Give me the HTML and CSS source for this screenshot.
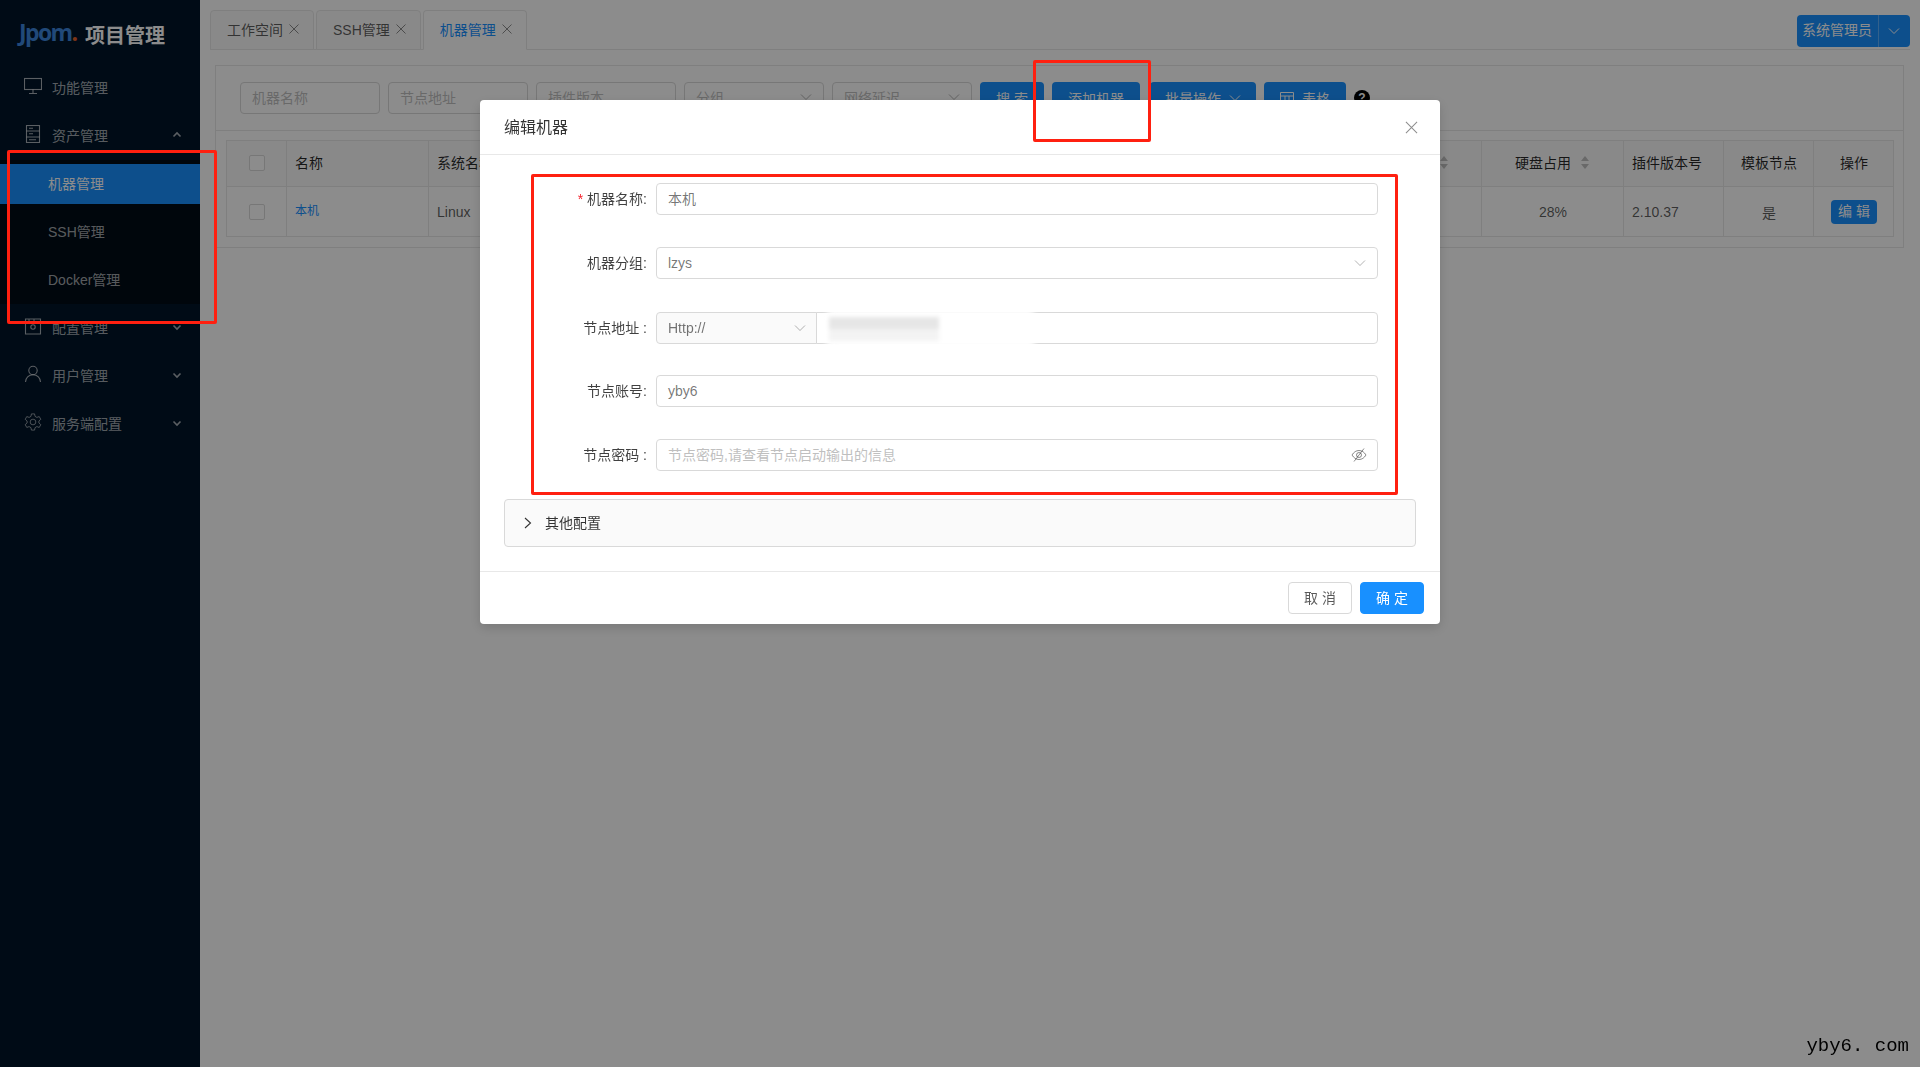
FILE: index.html
```html
<!DOCTYPE html>
<html lang="zh-CN">
<head>
  <meta charset="UTF-8">
  <title>机器管理</title>
  <link rel="stylesheet" href="styles.css">
</head>
<body>
  <div class="layout">
    <!-- Sidebar -->
    <aside class="sider">
      <div class="logo">
        <span class="logo-mark">Jpom<span class="logo-dot">.</span></span>
        <span class="logo-title">项目管理</span>
      </div>
      <div class="menu-item">
        <svg class="menu-icon" viewBox="0 0 18 18"><rect x="0.5" y="1.5" width="17" height="11"/><path d="M9 12.500v3.500M5 16.500h8"/></svg>
        <span>功能管理</span>
      </div>
      <div class="menu-item">
        <svg class="menu-icon" viewBox="0 0 18 18"><rect x="2.500" y="0.500" width="13" height="17"/><path d="M2.500 6h13M2.500 12h13M5 3.200h4M5 8.800h4M5 14.800h7"/></svg>
        <span>资产管理</span>
        <svg class="menu-arrow" viewBox="0 0 10 10"><path d="M1.500 6.500L5 3l3.500 3.500"/></svg>
      </div>
      <div class="submenu">
        <div class="sub-item active">机器管理</div>
        <div class="sub-item">SSH管理</div>
        <div class="sub-item">Docker管理</div>
      </div>
      <div class="menu-item">
        <svg class="menu-icon" viewBox="0 0 18 18"><path d="M1.500 2h15v15h-15zM5 2v2.500h5V2"/><circle cx="9" cy="10" r="2.200"/></svg>
        <span>配置管理</span>
        <svg class="menu-arrow" viewBox="0 0 10 10"><path d="M1.500 3.500L5 7l3.500-3.500"/></svg>
      </div>
      <div class="menu-item">
        <svg class="menu-icon" viewBox="0 0 18 18"><circle cx="9" cy="5.500" r="4.200"/><path d="M1.500 17c0-4.200 3.200-7.300 7.500-7.300s7.500 3.100 7.500 7.300"/></svg>
        <span>用户管理</span>
        <svg class="menu-arrow" viewBox="0 0 10 10"><path d="M1.500 3.500L5 7l3.500-3.500"/></svg>
      </div>
      <div class="menu-item">
        <svg class="menu-icon" viewBox="0 0 24 24"><polygon points="14.74,4.48 14.1,1.2 9.9,1.2 9.26,4.48 6.86,5.87 3.7,4.78 1.6,8.42 4.12,10.61 4.12,13.39 1.6,15.58 3.7,19.22 6.86,18.13 9.26,19.52 9.9,22.8 14.1,22.8 14.74,19.52 17.14,18.13 20.3,19.22 22.4,15.58 19.88,13.39 19.88,10.61 22.4,8.42 20.3,4.78 17.14,5.87"/><circle cx="12" cy="12" r="3.8"/></svg>
        <span>服务端配置</span>
        <svg class="menu-arrow" viewBox="0 0 10 10"><path d="M1.500 3.500L5 7l3.500-3.500"/></svg>
      </div>
    </aside>

    <main class="main">
      <!-- Tabs -->
      <div class="tabs-bar">
        <div class="tabs">
          <div class="tab">工作空间<svg class="tab-close" viewBox="0 0 10 10"><path d="M0.500 0.500l9 9M9.500 0.500l-9 9"/></svg></div>
          <div class="tab">SSH管理<svg class="tab-close" viewBox="0 0 10 10"><path d="M0.500 0.500l9 9M9.500 0.500l-9 9"/></svg></div>
          <div class="tab active">机器管理<svg class="tab-close" viewBox="0 0 10 10"><path d="M0.500 0.500l9 9M9.500 0.500l-9 9"/></svg></div>
        </div>
        <div class="user-btn">
          <span class="user-name">系统管理员</span>
          <span class="user-drop"><svg class="chevron" viewBox="0 0 12 12"><path d="M1 3.500l5 5 5-5"/></svg></span>
        </div>
      </div>

      <!-- Machine list card -->
      <section class="card">
        <div class="toolbar">
          <div class="field placeholder">机器名称</div>
          <div class="field placeholder">节点地址</div>
          <div class="field placeholder">插件版本</div>
          <div class="field placeholder">分组<svg class="chevron" viewBox="0 0 12 12"><path d="M1 3.500l5 5 5-5"/></svg></div>
          <div class="field placeholder">网络延迟<svg class="chevron" viewBox="0 0 12 12"><path d="M1 3.500l5 5 5-5"/></svg></div>
          <div class="btn btn-search">搜 索</div>
          <div class="btn btn-add">添加机器</div>
          <div class="btn btn-batch">批量操作<svg class="chevron" viewBox="0 0 12 12"><path d="M1 3.500l5 5 5-5"/></svg></div>
          <div class="btn btn-view"><svg class="table-icon" viewBox="0 0 14 14"><path d="M0.500 1.500h13v11h-13zM0.500 5h13M5 5v7.500M9 5v7.500"/></svg>表格</div>
          <div class="help">?</div>
        </div>
        <div class="card-body">
          <table class="machines">
            <colgroup>
              <col class="c-check"><col class="c-name"><col class="c-os"><col class="c-addr"><col class="c-ver"><col class="c-net"><col class="c-cpu"><col class="c-load"><col class="c-mem"><col class="c-disk"><col class="c-plugin"><col class="c-tpl"><col class="c-op">
            </colgroup>
            <thead>
              <tr>
                <th class="center"><span class="checkbox"></span></th>
                <th>名称</th>
                <th>系统名称</th>
                <th>节点地址</th>
                <th>节点版本</th>
                <th>网络延迟</th>
                <th>CPU占用</th>
                <th>负载</th>
                <th class="center"><span class="sortable">内存占用<span class="sorter"></span></span></th>
                <th class="center"><span class="sortable">硬盘占用<span class="sorter"></span></span></th>
                <th>插件版本号</th>
                <th class="center">模板节点</th>
                <th class="center">操作</th>
              </tr>
            </thead>
            <tbody>
              <tr>
                <td class="center"><span class="checkbox"></span></td>
                <td class="link">本机</td>
                <td>Linux</td>
                <td></td>
                <td></td>
                <td></td>
                <td></td>
                <td></td>
                <td></td>
                <td class="center">28%</td>
                <td>2.10.37</td>
                <td class="center">是</td>
                <td class="center"><span class="btn-edit">编 辑</span></td>
              </tr>
            </tbody>
          </table>
        </div>
      </section>
    </main>
  </div>

  <!-- Edit dialog -->
  <div class="mask">
    <div class="modal">
      <div class="modal-head">
        <span class="modal-title">编辑机器</span>
        <svg class="modal-close" viewBox="0 0 14 14"><path d="M1 1l12 12M13 1L1 13"/></svg>
      </div>
      <div class="modal-body">
        <div class="form-row">
          <div class="form-label"><span class="required">*</span>机器名称:</div>
          <div class="input input-cjk">本机</div>
        </div>
        <div class="form-row">
          <div class="form-label">机器分组:</div>
          <div class="input">lzys<svg class="chevron" viewBox="0 0 12 12"><path d="M1 3.500l5 5 5-5"/></svg></div>
        </div>
        <div class="form-row form-row-group">
          <div class="form-label">节点地址&nbsp;:</div>
          <div class="input-group">
            <div class="addon">Http://<svg class="chevron" viewBox="0 0 12 12"><path d="M1 3.500l5 5 5-5"/></svg></div>
            <div class="input addr-input">
              <div class="smudge"><span class="smudge-top"></span><span class="smudge-low"></span></div>
            </div>
          </div>
        </div>
        <div class="form-row">
          <div class="form-label">节点账号:</div>
          <div class="input">yby6</div>
        </div>
        <div class="form-row">
          <div class="form-label">节点密码&nbsp;:</div>
          <div class="input input-cjk input-empty">节点密码,请查看节点启动输出的信息
            <svg class="eye" viewBox="0 0 16 16"><path d="M1 8c1.800-3 4.200-4.500 7-4.500S13.200 5 15 8c-1.800 3-4.200 4.500-7 4.500S2.800 11 1 8z"/><circle cx="8" cy="8" r="2.500"/><path d="M13 1.500L3 14.500"/></svg>
          </div>
        </div>
        <div class="collapse">
          <svg class="collapse-arrow" viewBox="0 0 8 12"><path d="M1 1l5.500 5L1 11"/></svg>
          <span>其他配置</span>
        </div>
      </div>
      <div class="modal-foot">
        <div class="btn-cancel">取 消</div>
        <div class="btn-ok">确 定</div>
      </div>
    </div>
  </div>

  <!-- Annotations drawn on top of the screenshot -->
  <div class="mark mark-sider"></div>
  <div class="mark mark-add"></div>
  <div class="mark mark-form"></div>
  <div class="watermark">yby6. com</div>
</body>
</html>
```

FILE: styles.css
```css
/* Base */
*, ::before, ::after {
  box-sizing: border-box;
  margin: 0;
  padding: 0;
}
html, body {
  height: 100%;
  overflow: hidden;
}
body {
  background: #fff;
  color: rgba(0,0,0,.65);
  font-family: "Liberation Sans", "Noto Sans CJK SC", sans-serif;
  font-size: 14px;
}
.layout {
  display: flex;
  height: 100vh;
}
svg {
  fill: none;
  stroke: currentColor;
}
.chevron {
  width: 12px;
  height: 12px;
  stroke-width: 1;
  color: rgba(0,0,0,.3);
  flex: none;
}

/* Sidebar */
.sider {
  width: 200px;
  flex: none;
  background: #001529;
  color: rgba(255,255,255,.65);
}
.logo {
  display: flex;
  align-items: center;
  height: 67px;
  padding: 0 0 0 19px;
}
.logo-mark {
  font-family: "Open Sans", sans-serif;
  font-size: 23px;
  font-weight: 700;
  letter-spacing: -1.6px;
  color: #3d86dc;
  width: 66px;
  margin-top: -3px;
}
.logo-dot {
  color: #e8622a;
}
.logo-title {
  font-size: 20px;
  font-weight: 700;
  color: #fff;
  margin-top: 2px;
}
.menu-item {
  display: flex;
  align-items: center;
  height: 40px;
  margin-bottom: 8px;
  padding-left: 24px;
}
.menu-icon {
  width: 18px;
  height: 18px;
  margin-right: 10px;
  stroke-width: 1.1;
  margin-top: -2px;
}
.menu-arrow {
  width: 10px;
  height: 10px;
  margin-left: auto;
  margin-right: 18px;
  stroke-width: 1.6;
}
.submenu {
  background: #000c17;
  margin: -3px 0 3px;
  padding: 4px 0;
}
.sub-item {
  height: 40px;
  line-height: 40px;
  padding-left: 48px;
  margin-bottom: 8px;
}
.sub-item:last-child {
  margin-bottom: 0;
}
.sub-item.active {
  background: #1890ff;
  color: #fff;
}

/* Tabs */
.main {
  flex: 1;
  min-width: 0;
  padding: 0 10px;
}
.tabs-bar {
  display: flex;
  justify-content: space-between;
  align-items: flex-start;
  height: 50px;
  padding-top: 10px;
  border-bottom: 1px solid #e8e8e8;
}
.tabs {
  display: flex;
  gap: 2px;
}
.tab {
  display: flex;
  align-items: center;
  height: 40px;
  padding: 0 14px 2px 16px;
  background: #fafafa;
  border: 1px solid #e8e8e8;
  border-radius: 4px 4px 0 0;
}
.tab.active {
  background: #fff;
  color: #1890ff;
  border-bottom-color: #fff;
}
.tab-close {
  width: 10px;
  height: 10px;
  margin-left: 6px;
  color: rgba(0,0,0,.45);
  stroke-width: 1;
}
.user-btn {
  display: flex;
  height: 32px;
  margin-top: 5px;
  background: #1890ff;
  color: #fff;
  border-radius: 4px;
  line-height: 30px;
}
.user-name {
  padding: 0 6px 0 5px;
  border-right: 1px solid rgba(255,255,255,.3);
}
.user-drop {
  display: flex;
  align-items: center;
  padding: 0 10px 0 9px;
}
.user-drop .chevron {
  color: #fff;
}

/* Card */
.card {
  margin: 15px 6px 0 5px;
  border: 1px solid #e8e8e8;
}
.toolbar {
  display: flex;
  align-items: flex-start;
  gap: 8px;
  padding: 16px 24px;
  border-bottom: 1px solid #e8e8e8;
  height: 65px;
}
.field {
  display: flex;
  align-items: center;
  justify-content: space-between;
  width: 140px;
  height: 32px;
  padding: 0 11px 2px;
  border: 1px solid #d9d9d9;
  border-radius: 4px;
}
.placeholder {
  color: #bfbfbf;
}
.btn {
  display: flex;
  align-items: center;
  justify-content: center;
  height: 32px;
  background: #1890ff;
  color: #fff;
  border-radius: 4px;
}
.btn-search {
  width: 64px;
}
.btn-add {
  width: 88px;
}
.btn-batch {
  width: 106px;
  gap: 8px;
  margin-left: 2px;
}
.btn-batch .chevron {
  color: #fff;
}
.btn-view {
  width: 82px;
  gap: 8px;
}
.table-icon {
  width: 14px;
  height: 14px;
  stroke-width: 1;
}
.help {
  width: 16px;
  height: 16px;
  margin-top: 8px;
  background: #000;
  color: #fff;
  border-radius: 50%;
  font-size: 12px;
  font-weight: 700;
  line-height: 16px;
  text-align: center;
}
.card-body {
  padding: 9px 10px 10px;
}

/* Table */
.machines {
  width: 1667px;
  table-layout: fixed;
  border-collapse: collapse;
  border: 1px solid #e8e8e8;
}
.machines th, .machines td {
  border: 1px solid #e8e8e8;
  padding: 0 9px 0 8px;
  text-align: left;
  white-space: nowrap;
  overflow: hidden;
}
.machines th {
  height: 46px;
  padding-bottom: 3px;
  background: #fafafa;
  color: rgba(0,0,0,.85);
  font-weight: 400;
}
.machines td {
  height: 50px;
}
.machines .center {
  text-align: center;
  padding-left: 9px;
  padding-right: 8px;
}
.c-check { width: 60px; }
.c-name { width: 142px; }
.c-os { width: 132px; }
.c-addr { width: 200px; }
.c-ver { width: 140px; }
.c-net { width: 120px; }
.c-cpu { width: 160px; }
.c-load { width: 160px; }
.c-mem { width: 141px; }
.c-disk { width: 142px; }
.c-plugin { width: 100px; }
.c-tpl { width: 90px; }
.c-op { width: 80px; }
.checkbox {
  display: inline-block;
  width: 16px;
  height: 16px;
  background: #fff;
  border: 1px solid #d9d9d9;
  border-radius: 2px;
  vertical-align: middle;
}
.machines td.link {
  color: #1890ff;
  font-size: 12px;
  padding-bottom: 5px;
}
.sortable {
  display: inline-flex;
  align-items: center;
  gap: 8px;
}
.sorter {
  display: inline-block;
  width: 12px;
  height: 13px;
  position: relative;
}
.sorter::before, .sorter::after {
  content: "";
  position: absolute;
  left: 2px;
  border-left: 4px solid transparent;
  border-right: 4px solid transparent;
}
.sorter::before {
  top: 0;
  border-bottom: 5px solid #bfbfbf;
}
.sorter::after {
  bottom: 0;
  border-top: 5px solid #bfbfbf;
}
.btn-edit {
  display: inline-block;
  height: 24px;
  padding: 0 7px;
  background: #1890ff;
  color: #fff;
  border-radius: 4px;
  line-height: 22px;
  vertical-align: middle;
}

/* Dialog */
.mask {
  position: fixed;
  inset: 0;
  display: flex;
  justify-content: center;
  align-items: flex-start;
  padding-top: 100px;
  background: rgba(0,0,0,.45);
}
.modal {
  width: 960px;
  background: #fff;
  border-radius: 4px;
  box-shadow: 0 4px 12px rgba(0,0,0,.15);
}
.modal-head {
  display: flex;
  align-items: center;
  justify-content: space-between;
  height: 55px;
  padding: 0 22px 0 24px;
  border-bottom: 1px solid #e8e8e8;
}
.modal-title {
  font-size: 16px;
  font-weight: 400;
  color: rgba(0,0,0,.8);
  margin-top: -2px;
}
.modal-close {
  width: 13px;
  height: 13px;
  color: rgba(0,0,0,.45);
  stroke-width: 1.1;
}
.modal-body {
  padding: 28px 24px 24px;
}
.form-row {
  display: flex;
  align-items: center;
  height: 32px;
  margin-bottom: 32px;
  padding-right: 38px;
}
.form-row-group {
  padding-top: 1px;
  height: 33px;
  margin-bottom: 31px;
}
.form-label {
  width: 152px;
  flex: none;
  padding: 0 9px 2px 0;
  text-align: right;
  color: rgba(0,0,0,.75);
  white-space: nowrap;
}
.required {
  color: #f5222d;
  margin-right: 4px;
  font-size: 14px;
}
.input {
  flex: 1;
  display: flex;
  align-items: center;
  justify-content: space-between;
  height: 32px;
  padding: 0 11px;
  background: #fff;
  color: rgba(0,0,0,.55);
  border: 1px solid #d9d9d9;
  border-radius: 4px;
  position: relative;
}
.input-cjk {
  padding-bottom: 2px;
}
.input-empty {
  color: #bfbfbf;
  padding-right: 10px;
}
.input-empty .eye {
  margin-bottom: -2px;
}
.eye {
  width: 16px;
  height: 16px;
  color: rgba(0,0,0,.45);
  stroke-width: 1;
}
.input-group {
  flex: 1;
  display: flex;
  height: 32px;
}
.addon {
  display: flex;
  align-items: center;
  justify-content: space-between;
  width: 161px;
  padding: 0 10px 0 11px;
  background: #fafafa;
  color: rgba(0,0,0,.55);
  border: 1px solid #d9d9d9;
  border-radius: 4px 0 0 4px;
}
.addr-input {
  border-left: 1px solid #d9d9d9;
  border-radius: 0 4px 4px 0;
  margin-left: -1px;
}
/* the address is smudged out in the screenshot */
.smudge {
  position: absolute;
  left: 6px;
  top: -3px;
  width: 215px;
  height: 37px;
  background: #fff;
  border-radius: 12px;
  filter: blur(2px);
}
.smudge-top, .smudge-low {
  position: absolute;
  left: 6px;
  display: block;
}
.smudge-top {
  top: 7px;
  width: 110px;
  height: 12px;
  background: #e6e6e6;
}
.smudge-low {
  top: 19px;
  width: 110px;
  height: 12px;
  background: #f3f3f3;
}
.collapse {
  display: flex;
  align-items: center;
  height: 48px;
  margin-top: -4px;
  padding: 0 0 2px 19px;
  background: #fafafa;
  border: 1px solid #d9d9d9;
  border-radius: 4px;
  color: rgba(0,0,0,.8);
}
.collapse-arrow {
  width: 8px;
  height: 12px;
  margin: 2px 13px 0 0;
  stroke-width: 1.1;
}
.modal-foot {
  display: flex;
  justify-content: flex-end;
  gap: 8px;
  padding: 10px 16px;
  border-top: 1px solid #e8e8e8;
}
.btn-cancel, .btn-ok {
  width: 64px;
  height: 32px;
  line-height: 30px;
  text-align: center;
  border-radius: 4px;
  border: 1px solid #d9d9d9;
}
.btn-ok {
  background: #1890ff;
  border-color: #1890ff;
  color: #fff;
}

/* Red annotation boxes */
.mark {
  position: fixed;
  border: 3px solid #ff2010;
  border-radius: 2px;
}
.mark-sider {
  left: 7px;
  top: 150px;
  width: 210px;
  height: 174px;
}
.mark-add {
  left: 1033px;
  top: 60px;
  width: 118px;
  height: 82px;
}
.mark-form {
  left: 531px;
  top: 174px;
  width: 867px;
  height: 321px;
}
.watermark {
  position: fixed;
  right: 11px;
  bottom: 10px;
  font-family: "Liberation Mono", monospace;
  font-size: 19px;
  line-height: 22px;
  color: #000;
}
```
